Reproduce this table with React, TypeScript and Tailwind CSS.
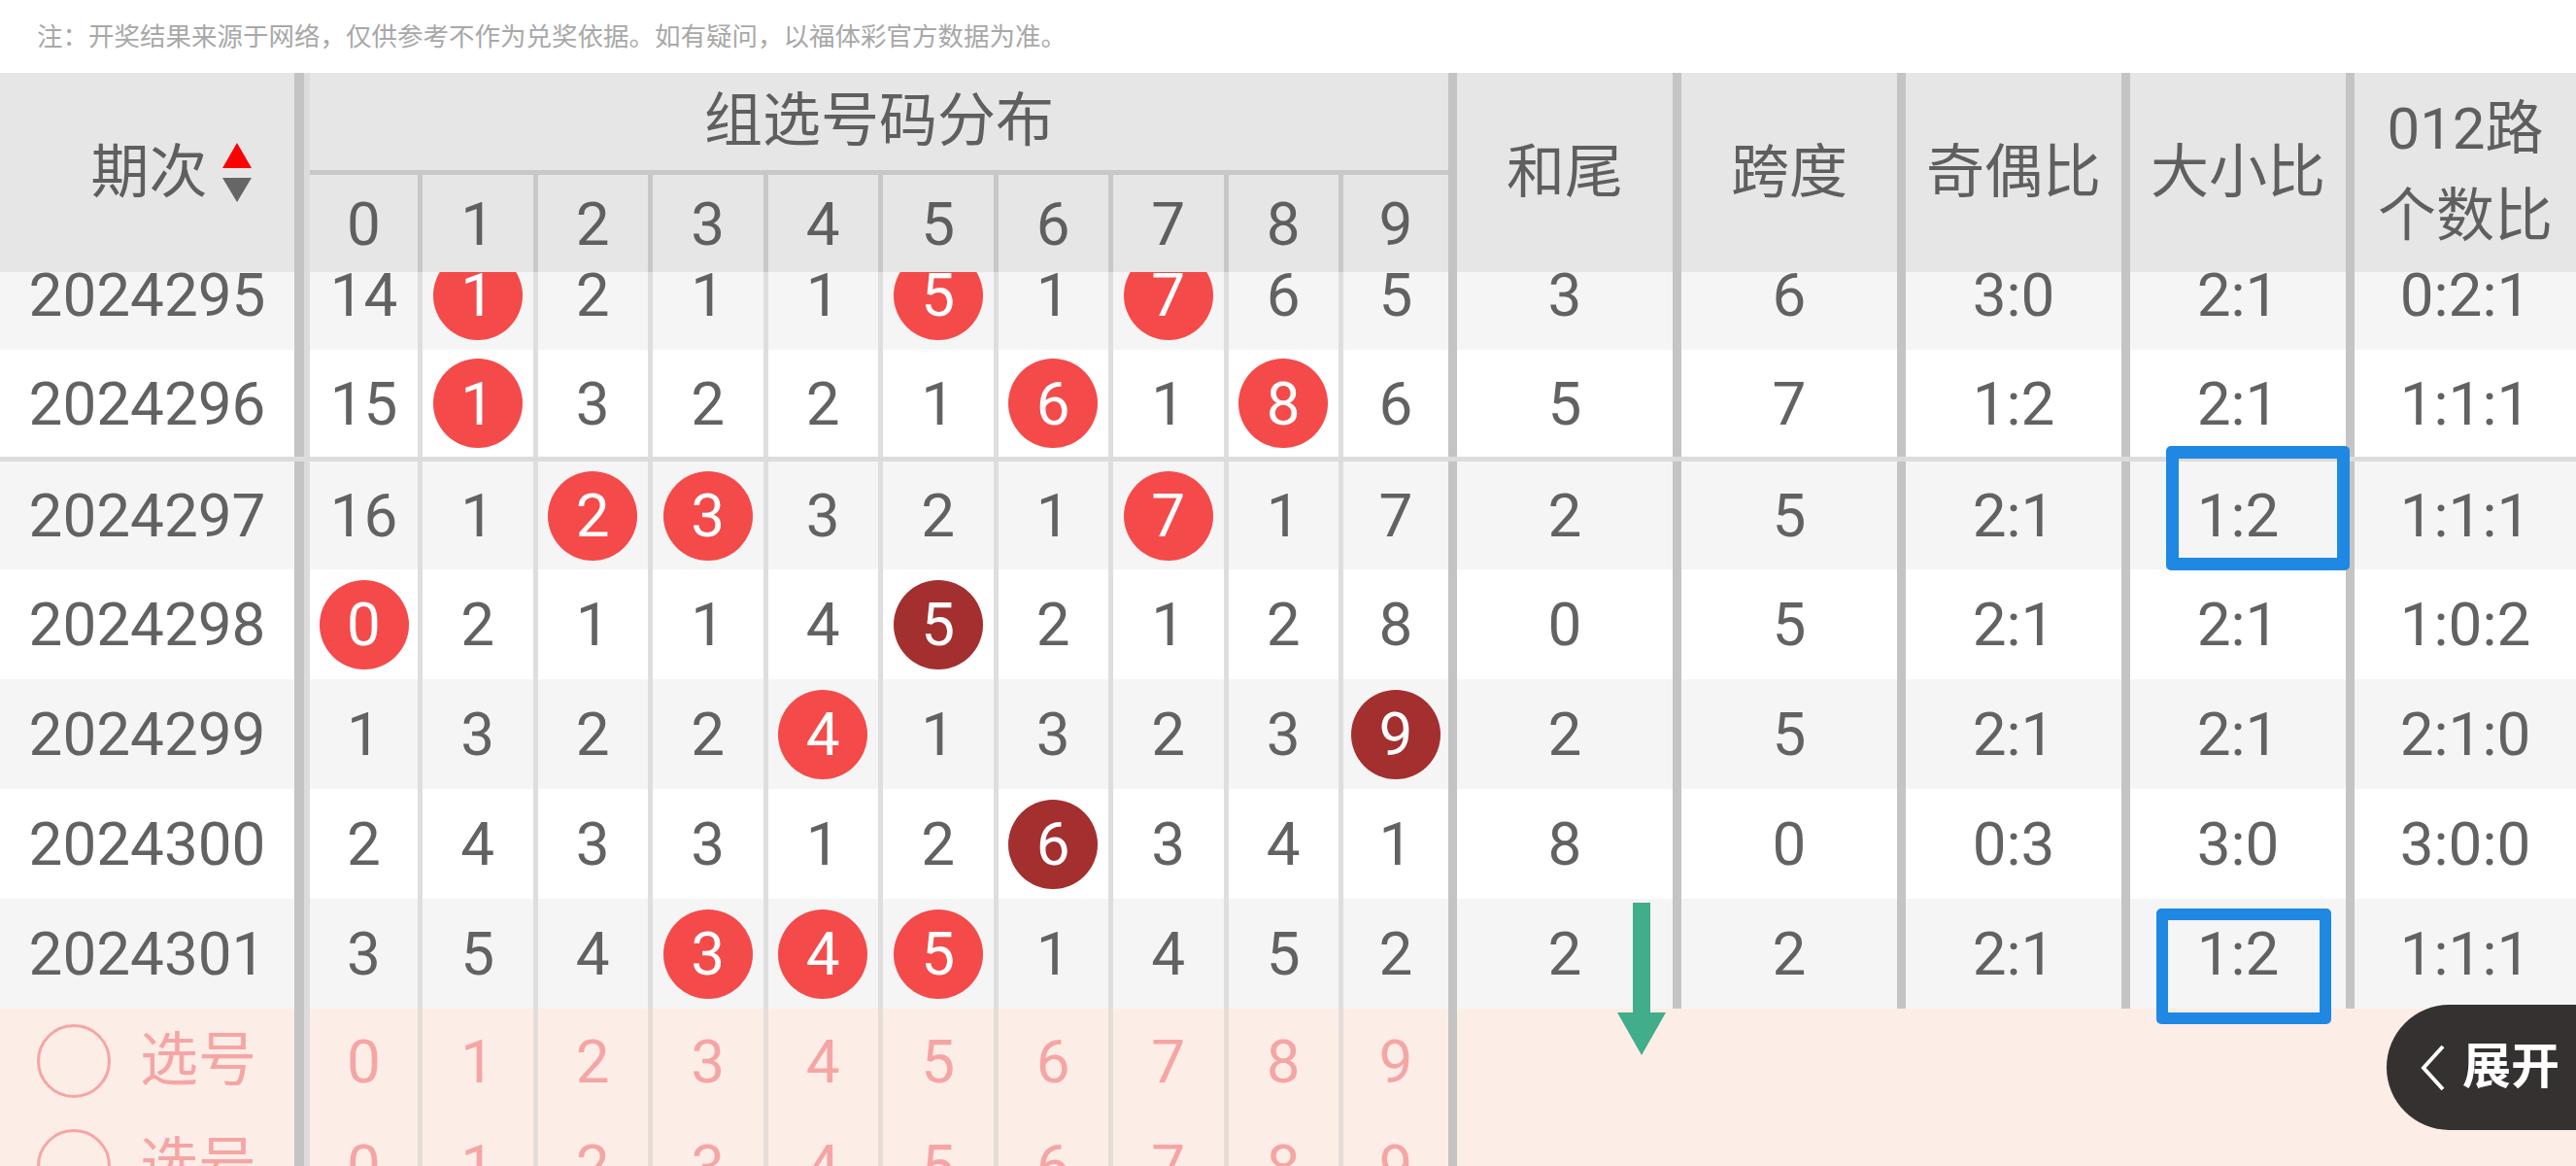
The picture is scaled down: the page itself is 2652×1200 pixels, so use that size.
import React from 'react';

// 'r' = red ball, 'd' = dark ball (repeat), otherwise the miss count
const rows = [
  { p: '2024295', d: ['14', 'r', '2', '1', '1', 'r', '1', 'r', '6', '5'], hw: '3', kd: '6', jo: '3:0', dx: '2:1', lu: '0:2:1' },
  { p: '2024296', d: ['15', 'r', '3', '2', '2', '1', 'r', '1', 'r', '6'], hw: '5', kd: '7', jo: '1:2', dx: '2:1', lu: '1:1:1' },
  { p: '2024297', d: ['16', '1', 'r', 'r', '3', '2', '1', 'r', '1', '7'], hw: '2', kd: '5', jo: '2:1', dx: '1:2', lu: '1:1:1' },
  { p: '2024298', d: ['r', '2', '1', '1', '4', 'd', '2', '1', '2', '8'], hw: '0', kd: '5', jo: '2:1', dx: '2:1', lu: '1:0:2' },
  { p: '2024299', d: ['1', '3', '2', '2', 'r', '1', '3', '2', '3', 'd'], hw: '2', kd: '5', jo: '2:1', dx: '2:1', lu: '2:1:0' },
  { p: '2024300', d: ['2', '4', '3', '3', '1', '2', 'd', '3', '4', '1'], hw: '8', kd: '0', jo: '0:3', dx: '3:0', lu: '3:0:0' },
  { p: '2024301', d: ['3', '5', '4', 'r', 'r', 'r', '1', '4', '5', '2'], hw: '2', kd: '2', jo: '2:1', dx: '1:2', lu: '1:1:1' },
];

const digitW = (i: number) =>
  i === 0 ? 'w-[111px]' : i === 9 ? 'w-[113px] border-l-[5px]' : 'w-[118.5px] border-l-[5px]';

const Divider = () => (
  <>
    <div className="w-[10px] shrink-0 bg-[#c4c4c4]" />
    <div className="w-[6px] shrink-0 bg-[#dcdcdc]" />
  </>
);

const SortArrows = () => (
  <svg width="32" height="62" viewBox="0 0 32 62" className="ml-[14px]">
    <polygon points="16,0 31,26 1,26" fill="#ff0000" />
    <polygon points="1,36 31,36 16,61" fill="#666666" />
  </svg>
);

const Header = () => (
  <div className="flex h-[205px] bg-[#e6e6e6] text-[#5f5f5f]">
    <div className="flex w-[303px] shrink-0 items-center justify-center pl-[50px] text-[60px]">
      <span>期次</span>
      <SortArrows />
    </div>
    <Divider />
    <div className="flex w-[1172px] shrink-0 flex-col">
      <div className="flex h-[100px] items-center justify-center text-[60px]">组选号码分布</div>
      <div className="h-[5px] bg-[#c8c8c8]" />
      <div className="flex flex-1">
        {Array.from({ length: 10 }).map((_, i) => (
          <div key={i} className={`${digitW(i)} flex shrink-0 items-center justify-center border-[#c8c8c8] text-[62px]`}>
            {i}
          </div>
        ))}
      </div>
    </div>
    {['和尾', '跨度', '奇偶比', '大小比'].map((t) => (
      <div key={t} className="flex w-[231px] shrink-0 items-center justify-center border-l-[9px] border-[#c4c4c4] text-[60px]">
        {t}
      </div>
    ))}
    <div className="flex flex-1 flex-col items-center justify-center border-l-[9px] border-[#c4c4c4] text-[60px] leading-[90px]">
      <span>012路</span>
      <span>个数比</span>
    </div>
  </div>
);

const Ball = ({ n, dark }: { n: number; dark?: boolean }) => (
  <span className={`flex h-[92px] w-[92px] items-center justify-center rounded-full text-white ${dark ? 'bg-[#a32f2f]' : 'bg-[#f44a4a]'}`}>
    {n}
  </span>
);

const DataRow = ({ r, bg, h }: { r: (typeof rows)[number]; bg: string; h: string }) => (
  <div className={`flex ${h} ${bg} text-[62px] text-[#626262]`}>
    <div className="flex w-[303px] shrink-0 items-center justify-center">{r.p}</div>
    <Divider />
    {r.d.map((v, i) => (
      <div key={i} className={`${digitW(i)} flex shrink-0 items-center justify-center border-[#dedede]`}>
        {v === 'r' ? <Ball n={i} /> : v === 'd' ? <Ball n={i} dark /> : v}
      </div>
    ))}
    {[r.hw, r.kd, r.jo, r.dx].map((v, i) => (
      <div key={i} className="flex w-[231px] shrink-0 items-center justify-center border-l-[9px] border-[#c4c4c4]">
        {v}
      </div>
    ))}
    <div className="flex flex-1 items-center justify-center border-l-[9px] border-[#c4c4c4]">{r.lu}</div>
  </div>
);

const PickRow = () => (
  <div className="flex h-[108px] bg-[#fdede7] text-[62px] text-[#f6a5a5]">
    <div className="flex w-[303px] shrink-0 items-center pl-[38px]">
      <span className="h-[76px] w-[76px] rounded-full border-[3px] border-[#f6a5a5]" />
      <span className="ml-[30px] text-[60px]">选号</span>
    </div>
    <Divider />
    {Array.from({ length: 10 }).map((_, i) => (
      <div key={i} className={`${digitW(i)} flex shrink-0 items-center justify-center border-[#e6dcd8]`}>
        {i}
      </div>
    ))}
    <div className="flex-1 border-l-[9px] border-[#c4c4c4]" />
  </div>
);

export default function App() {
  return (
    <div className="relative h-[1200px] w-[2652px] overflow-hidden bg-white font-['Roboto','Noto_Sans_CJK_SC',sans-serif]">
      <div className="flex h-[75px] items-center pl-[38px] text-[26.5px] text-[#a8a8a8]">
        注：开奖结果来源于网络，仅供参考不作为兑奖依据。如有疑问，以福体彩官方数据为准。
      </div>

      <Header />

      {/* scrolled body, first row half under the header */}
      <div className="h-[920px] overflow-hidden">
        <div className="-mt-[33px]">
          {rows.map((r, i) => (
            <DataRow
              key={r.p}
              r={r}
              bg={i % 2 === 0 ? 'bg-[#f5f5f5]' : 'bg-white'}
              h={i === 1 ? 'h-[115px] border-b-[5px] border-[#dcdcdc]' : i === 2 ? 'h-[111px]' : 'h-[113px]'}
            />
          ))}
          <PickRow />
          <PickRow />
        </div>
      </div>

      {/* highlight boxes */}
      <div className="absolute left-[2230px] top-[459px] h-[128px] w-[189px] rounded-[5px] border-[13px] border-[#1f88e3]" />
      <div className="absolute left-[2220px] top-[935px] h-[119px] w-[180px] rounded-[5px] border-[12px] border-[#1f88e3]" />

      {/* green arrow */}
      <svg width="50" height="157" viewBox="0 0 50 157" className="absolute left-[1665px] top-[929px]">
        <rect x="16" y="0" width="18" height="114" fill="#42ad8b" />
        <polygon points="0,113 50,113 25,157" fill="#42ad8b" />
      </svg>

      {/* expand button */}
      <div className="absolute left-[2457px] right-0 top-[1034px] flex h-[129px] items-center rounded-l-full bg-[#353130] pl-[34px]">
        <svg width="28" height="48" viewBox="0 0 28 48">
          <polyline points="24,2 4,24 24,46" fill="none" stroke="#ffffff" strokeWidth="4" />
        </svg>
        <span className="ml-[16px] text-[50px] font-bold text-white">展开</span>
      </div>
    </div>
  );
}
